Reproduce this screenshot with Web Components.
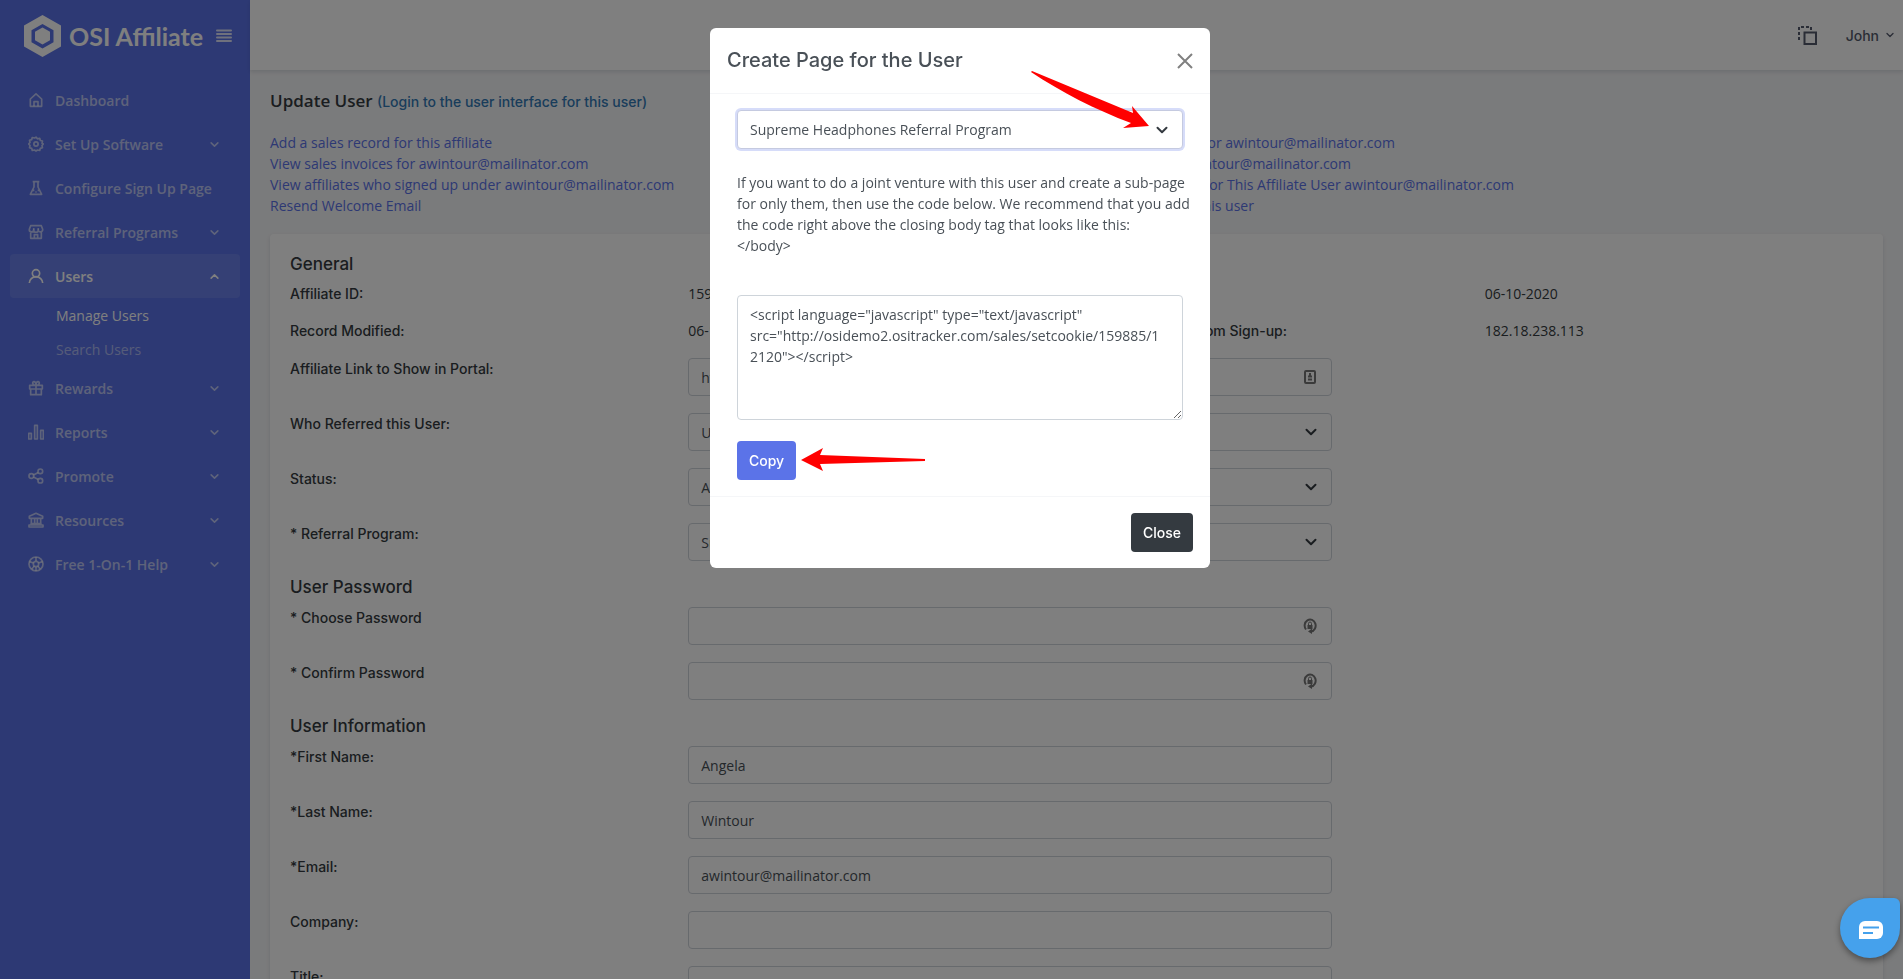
<!DOCTYPE html>
<html lang="en">
<head>
<meta charset="utf-8">
<title>Update User</title>
<style>
body { margin: 0; }
</style>
</head>
<body>
<affiliate-app></affiliate-app>

<script>
const icons = {
  home: '<path d="M3.5 21.5v-11L12 2.800l8.500 7.700v11z"/><path d="M9 21.500v-7h6v7"/>',
  gear: '<circle cx="12" cy="12" r="3.200"/><path d="M12 1.800l2.300 2.400 3.300-.700.900 3.200 3.200.900-.700 3.300L23 12l-2 2.300.700 3.300-3.200.900-.900 3.200-3.300-.700L12 22.500 9.700 21l-3.300.700-.9-3.200-3.200-.9.700-3.300L1 12l2-2.300-.7-3.300 3.200-.9.900-3.200 3.300.700z"/>',
  flask: '<path d="M7 2.500h10M9 2.500v8L3.500 21.500h17L15 10.500v-8M6.500 15.500h3M14.500 15.500h3"/><path d="M11 18h2"/>',
  store: '<path d="M4 12v9.500h16V12M4 2.500h16l2 5.500a3.300 3.300 0 0 1-6.600 1 3.300 3.300 0 0 1-6.800 0A3.300 3.300 0 0 1 2 8zM9.500 21.500V16h5v5.500"/><path d="M8.600 6v3M15.400 6v3"/>',
  user: '<circle cx="12" cy="8" r="5.500"/><path d="M2 22.500a10 9.500 0 0 1 20 0"/>',
  gift: '<path d="M2.500 8h19v5.500h-19zM4 13.500h16v8.500H4zM12 8v14M12 8C6 8 6 2.500 9 2.500S12 6 12 8c0-2 0-5.500 3-5.500S18 8 12 8"/>',
  chart: '<path d="M1 14h4v8.500H1zM10 2h4v20.500h-4zM19 9.500h4v13h-4z"/>',
  share: '<circle cx="5" cy="12" r="3.500"/><circle cx="18.500" cy="5" r="3.500"/><circle cx="18.500" cy="19" r="3.500"/><path d="M8.200 10.400l7.200-3.800M8.200 13.600l7.200 3.800"/>',
  bank: '<path d="M2 9.500v-3L12 2l10 4.500v3zM5 9.500v8M10 9.500v8M14 9.500v8M19 9.500v8M3.500 17.500h17M1.500 22.500h21v-3h-21z"/>',
  help: '<circle cx="12" cy="12" r="10.500"/><circle cx="12" cy="12" r="4"/><path d="M12 1.500V8M12 16v6.500M2 8.500l6.500 2M22 8.500l-6.500 2M5.500 20l4-5M18.500 20l-4-5"/>',
};

const icon = (name) => `
  <svg viewBox="0 0 24 24" width="16" height="16" fill="none" stroke="currentColor" stroke-width="2.500" stroke-linejoin="round" aria-hidden="true">${icons[name]}</svg>
`;

const chevron = (size, width = 2) => `
  <svg class="chevron" viewBox="0 0 12 12" width="${size}" height="${size}" fill="none" stroke="currentColor" stroke-width="${width}" stroke-linecap="round" stroke-linejoin="round" aria-hidden="true"><path d="M1.500 3.800L6 8.200l4.500-4.400"/></svg>
`;

const base = `
  *, *::before, *::after { box-sizing: border-box; }
  a { color: inherit; text-decoration: none; }
  button { font: inherit; cursor: pointer; }
`;

const control = `
  input, select, textarea {
    display: block;
    width: 100%;
    height: 38px;
    padding: 0 12px;
    border: 1px solid #ced4da;
    border-radius: 4px;
    background: #fff;
    color: #495057;
    font: inherit;
    appearance: none;
    outline: none;
  }
  .control { position: relative; color: #343a40; }
  .control svg { position: absolute; right: 15px; top: 50%; transform: translateY(-50%); pointer-events: none; }
`;

const define = (name, render) =>
  customElements.define(
    name,
    class extends HTMLElement {
      constructor() {
        super();
        this.attachShadow({ mode: "open" });
      }
      connectedCallback() {
        this.shadowRoot.innerHTML = `<style>${base}</style>${render(this)}`;
      }
    }
  );

define("nav-item", (el) => `
  <style>
  :host { display: block; color: rgba(255, 255, 255, .6); }
  :host([active]) { color: #fff; }
  a {
    display: flex;
    align-items: center;
    gap: 11px;
    height: 44px;
    margin: 0 10px;
    padding: 0 21px 0 18px;
    border-radius: 4px;
    font-weight: 600;
    white-space: nowrap;
  }
  :host([active]) a { background: rgba(255, 255, 255, .1); }
  .chevron { margin-left: auto; }
  :host([active]) .chevron { transform: rotate(180deg); }
  </style>
  <a href="#">${icon(el.getAttribute("icon"))}<span><slot></slot></span>${el.hasAttribute("leaf") ? "" : chevron(9)}</a>
  <slot name="sub"></slot>
`);

define("nav-subitem", () => `
  <style>
  :host { display: block; color: rgba(255, 255, 255, .5); }
  :host([active]) { color: #fff; }
  a { display: block; padding: 7px 10px 6px 56px; }
  </style>
  <a href="#"><slot></slot></a>
`);

define("side-bar", () => `
  <style>
  :host { display: block; flex: 0 0 250px; min-width: 0; background: #5b73e8; }
  .brand { display: flex; align-items: center; height: 72px; padding: 0 18px 0 24px; color: #fff; }
  .brand a { display: flex; align-items: center; gap: 8px; font: 700 25px/30px Lato, sans-serif; white-space: nowrap; }
  button { display: flex; margin-left: auto; padding: 0; border: 0; background: none; color: rgba(255, 255, 255, .8); }
  nav { padding-top: 6px; }
  </style>
  <div class="brand">
    <a href="#">
      <svg width="37" height="42" viewBox="0 0 37 42" aria-hidden="true">
        <path fill="#fff" fill-rule="evenodd" d="M18.500 0L37 10.500v21L18.500 42 0 31.500v-21zM18.500 9L7.500 15.200v12L18.500 33.500l11-6.300v-12z"/>
        <path fill="#fff" d="M18.500 12.500l7.500 4.300v8.400l-7.500 4.300-7.500-4.300v-8.400z"/>
      </svg>
      OSI Affiliate
    </a>
    <button type="button" aria-label="Toggle menu">
      <svg width="16" height="14" viewBox="0 0 16 14" stroke="currentColor" stroke-width="2" stroke-linecap="round"><path d="M1 1.500h14M1 5h14M1 8.500h14M1 12h14"/></svg>
    </button>
  </div>
  <nav>
    <nav-item icon="home" leaf>Dashboard</nav-item>
    <nav-item icon="gear">Set Up Software</nav-item>
    <nav-item icon="flask" leaf>Configure Sign Up Page</nav-item>
    <nav-item icon="store">Referral Programs</nav-item>
    <nav-item icon="user" active>Users
      <nav-subitem slot="sub" active>Manage Users</nav-subitem>
      <nav-subitem slot="sub">Search Users</nav-subitem>
    </nav-item>
    <nav-item icon="gift">Rewards</nav-item>
    <nav-item icon="chart">Reports</nav-item>
    <nav-item icon="share">Promote</nav-item>
    <nav-item icon="bank">Resources</nav-item>
    <nav-item icon="help">Free 1-On-1 Help</nav-item>
  </nav>
`);

define("top-bar", () => `
  <style>
  :host {
    display: flex;
    align-items: center;
    justify-content: flex-end;
    gap: 29px;
    height: 70px;
    padding: 0 9px 0 20px;
    background: #fff;
    box-shadow: 0 2px 4px rgba(15, 34, 58, .12);
    color: #555b6d;
    font-family: var(--medium);
    font-weight: 500;
  }
  button { display: flex; align-items: center; gap: 7px; padding: 0; border: 0; background: none; color: inherit; }
  </style>
  <button type="button" aria-label="Copy">
    <svg width="19" height="19" viewBox="0 0 19 19" fill="none" stroke="currentColor" stroke-width="2" aria-hidden="true"><path d="M6.500 6.500h11.500v11.500H6.500z"/><path stroke-dasharray="3 2" d="M13 4V1H1v12h3"/></svg>
  </button>
  <button type="button">John ${chevron(8)}</button>
`);

define("form-section", (el) => `
  <style>
  :host { display: block; }
  h2 { margin: 0 0 10px; font: 500 17px/20px var(--medium); color: #343a40; }
  div { display: flex; flex-direction: column; gap: 17px; }
  </style>
  <h2>${el.getAttribute("heading")}</h2>
  <div><slot></slot></div>
`);

define("info-row", () => `
  <style>
  :host { display: grid; grid-template-columns: repeat(4, 1fr); column-gap: 20px; line-height: 20px; color: #343a40; }
  ::slotted(b) { font-family: var(--medium); font-weight: 500; }
  </style>
  <slot></slot>
`);

const fieldIcons = {
  contact: '<svg width="14" height="14" viewBox="0 0 14 14" fill="none" stroke="#777" stroke-width="2" aria-hidden="true"><rect x="2" y="1" width="10" height="12" rx="1"/><path d="M7 3v4M5 6.500h4M5 9.500h4"/></svg>',
  lock: '<svg width="14" height="16" viewBox="0 0 14 16" fill="none" stroke="#777" stroke-width="2" aria-hidden="true"><path d="M3 11.500A5.500 6 0 1 1 8 13.500"/><path fill="#777" stroke="none" d="M9 10.500v5.500l-4-2.500zM4.500 7h5v4h-5z"/><path stroke-width="1" d="M5.500 7V5.500a1.500 1.500 0 0 1 3 0V7"/></svg>',
};

define("form-row", (el) => {
  const { type = "text", value = "", icon = "" } = el.dataset;
  const field =
    type === "select"
      ? `<select id="field"><option>${value}</option></select>${chevron(12, 2)}`
      : `<input id="field" type="${type}" value="${value}">${fieldIcons[icon] ?? ""}`;
  return `
    <style>
    ${control}
    :host { display: grid; grid-template-columns: repeat(12, 1fr); column-gap: 20px; }
    label { grid-column: span 3; font: 500 14px/21px var(--medium); color: #343a40; }
    .control { grid-column: span 5; }
    </style>
    <label for="field"><slot></slot></label>
    <div class="control">${field}</div>
  `;
});

define("user-page", () => `
  <style>
  :host { display: block; padding: 20px; color: #343a40; }
  h1 { margin: 0 0 20px; font-size: 17px; font-weight: 600; line-height: 22px; }
  h1 a { font: 500 14px/21px var(--medium); color: #337ab7; }
  .links { display: grid; grid-template-columns: 1fr 1fr; gap: 0 20px; margin-bottom: 18px; line-height: 21px; color: #5b73e8; }
  .links div { display: flex; flex-direction: column; align-items: flex-start; }
  .card {
    display: flex;
    flex-direction: column;
    gap: 16px;
    padding: 20px;
    border-radius: 4px;
    background: #fff;
    box-shadow: 0 2px 4px rgba(15, 34, 58, .12);
  }
  </style>
  <h1>Update User <a href="#">(Login to the user interface for this user)</a></h1>
  <div class="links">
    <div>
      <a href="#">Add a sales record for this affiliate</a>
      <a href="#">View sales invoices for awintour@mailinator.com</a>
      <a href="#">View affiliates who signed up under awintour@mailinator.com</a>
      <a href="#">Resend Welcome Email</a>
    </div>
    <div>
      <a href="#">View commission for awintour@mailinator.com</a>
      <a href="#">View clicks for awintour@mailinator.com</a>
      <a href="#">See Commissions for This Affiliate User awintour@mailinator.com</a>
      <a href="#">Create Pages for this user</a>
    </div>
  </div>
  <div class="card">
    <form-section heading="General">
      <info-row><b>Affiliate ID:</b><span>159885</span><b>Date Added:</b><span>06-10-2020</span></info-row>
      <info-row><b>Record Modified:</b><span>06-10-2020</span><b>The IP Address From Sign-up:</b><span>182.18.238.113</span></info-row>
      <form-row data-value="http://" data-icon="contact">Affiliate Link to Show in Portal:</form-row>
      <form-row data-type="select" data-value="Unassigned">Who Referred this User:</form-row>
      <form-row data-type="select" data-value="Active">Status:</form-row>
      <form-row data-type="select" data-value="Supreme Headphones">* Referral Program:</form-row>
    </form-section>
    <form-section heading="User Password">
      <form-row data-type="password" data-icon="lock">* Choose Password</form-row>
      <form-row data-type="password" data-icon="lock">* Confirm Password</form-row>
    </form-section>
    <form-section heading="User Information">
      <form-row data-value="Angela">*First Name:</form-row>
      <form-row data-value="Wintour">*Last Name:</form-row>
      <form-row data-value="awintour@mailinator.com">*Email:</form-row>
      <form-row>Company:</form-row>
      <form-row>Title:</form-row>
    </form-section>
  </div>
`);

define("page-modal", () => `
  <style>
  ${control}
  :host {
    position: fixed;
    inset: 0 -17px 0 0;
    padding: 28px 0;
    background: rgba(0, 0, 0, .5);
    color: #495057;
  }
  section { position: relative; max-width: 500px; margin: 0 auto; border-radius: 6px; background: #fff; }
  header { display: flex; align-items: center; justify-content: space-between; padding: 16px 17px; border-bottom: 1px solid #f5f6f8; }
  h2 { margin: 0; font: 500 20px/33px var(--medium); }
  header button { display: flex; padding: 0; border: 0; background: none; color: #808080; }
  .body { padding: 16px 27px; }
  .body select { height: 39px; border-color: #c5cae0; box-shadow: 0 0 0 2px #d6dcf9; }
  p { margin: 23px 0 39px; line-height: 21px; white-space: nowrap; }
  .body textarea { height: 125px; padding: 8px 12px; line-height: 21px; resize: vertical; }
  .btn { height: 39px; padding: 0 12px; border: 0; border-radius: 4px; background: #5b73e8; color: #fff; font-family: var(--medium); font-weight: 500; }
  .body .btn { display: block; margin-top: 21px; }
  footer { display: flex; justify-content: flex-end; padding: 16px 17px; border-top: 1px solid #f5f6f8; }
  footer .btn { background: #343a40; }
  .arrow { position: absolute; fill: #f00; }
  .pick { left: 321px; top: 42px; }
  .copy { left: 91px; top: 420px; }
  </style>
  <section role="dialog" aria-labelledby="title">
    <header>
      <h2 id="title">Create Page for the User</h2>
      <button type="button" aria-label="Dismiss"><svg width="16" height="16" viewBox="0 0 16 16" stroke="currentColor" stroke-width="2"><path d="M1 1l14 14M15 1L1 15"/></svg></button>
    </header>
    <div class="body">
      <div class="control">
        <select aria-label="Referral program"><option>Supreme Headphones Referral Program</option></select>${chevron(12, 2)}
      </div>
      <p>If you want to do a joint venture with this user and create a sub-page<br>for only them, then use the code below. We recommend that you add<br>the code right above the closing body tag that looks like this:<br>&lt;/body&gt;</p>
      <textarea aria-label="Code">&lt;script language="javascript" type="text/javascript"
src="http://osidemo2.ositracker.com/sales/setcookie/159885/1
2120"&gt;&lt;/script&gt;</textarea>
      <button class="btn" type="button">Copy</button>
    </div>
    <footer><button class="btn" type="button">Close</button></footer>
    <svg class="arrow pick" width="120" height="60" viewBox="0 0 120 60" aria-hidden="true"><path d="M1 1l101 42-1-7 17 20-26 2 8-5C65 40 30 22 0 2z"/></svg>
    <svg class="arrow copy" width="126" height="24" viewBox="0 0 126 24" aria-hidden="true"><path d="M0 12L22 0l-3 7 105 4v2L19 16l3 7z"/></svg>
  </section>
`);

define("chat-launcher", () => `
  <style>
  :host { position: fixed; right: 3px; bottom: 21px; }
  button {
    display: flex;
    align-items: center;
    justify-content: center;
    width: 60px;
    height: 60px;
    padding: 4px 0 0 2px;
    border: 0;
    border-radius: 30px 6px 30px 30px;
    background: #45a1ec;
    box-shadow: 0 3px 6px rgba(0, 0, 0, .4);
  }
  </style>
  <button type="button" aria-label="Open chat">
    <svg width="24" height="18" viewBox="0 0 24 18"><path fill="#fff" d="M6 0h12a6 6 0 0 1 6 6v6a6 6 0 0 1-6 6H0V6a6 6 0 0 1 6-6z"/><path stroke="#45a1ec" stroke-width="2" d="M4 6.500h16M4 12h10"/></svg>
  </button>
`);

define("affiliate-app", () => `
  <style>
  :host {
    --medium: Inter, "Noto Sans", sans-serif;
    display: flex;
    height: 100vh;
    overflow: hidden;
    background: #f5f6f8;
    font: 400 14px/21px "Open Sans", "Noto Sans", sans-serif;
  }
  main { flex: 1; min-width: 0; }
  </style>
  <side-bar></side-bar>
  <main>
    <top-bar></top-bar>
    <user-page></user-page>
  </main>
  <page-modal></page-modal>
  <chat-launcher></chat-launcher>
`);
</script>
</body>
</html>
